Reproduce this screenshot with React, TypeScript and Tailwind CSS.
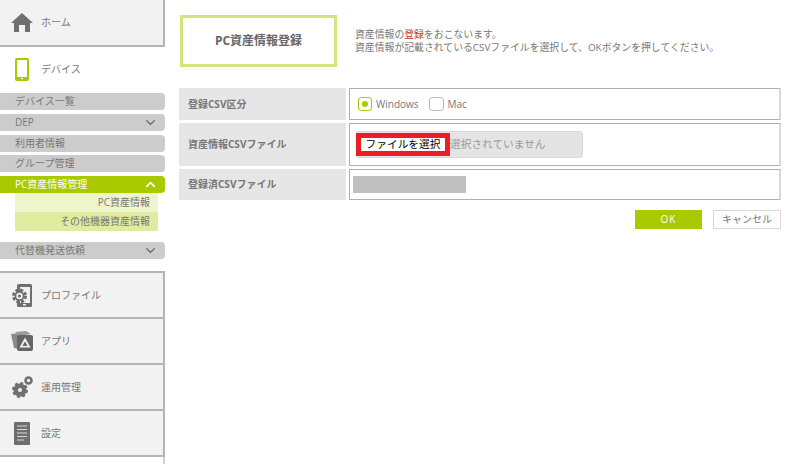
import { ChevronDown, ChevronUp } from "lucide-react";
import type { ReactNode } from "react";

function HomeIcon() {
  return (
    <svg width="22" height="19" viewBox="0 0 22 19">
      <path d="M11 0 L22 10 L19 10 L19 19 L14 19 L14 12 L8 12 L8 19 L3 19 L3 10 L0 10 Z" fill="#6f6f6f" />
    </svg>
  );
}

function DeviceIcon() {
  return (
    <svg width="14" height="23" viewBox="0 0 14 23">
      <rect x="1" y="1" width="12" height="21" rx="1" fill="#fff" stroke="#a8c800" strokeWidth="2" />
      <rect x="1" y="19" width="12" height="3" fill="#a8c800" />
      <rect x="6" y="20" width="2" height="1.2" fill="#fff" />
    </svg>
  );
}

function ProfileIcon() {
  return (
    <svg width="20" height="23" viewBox="0 0 20 23">
      <rect x="5" y="0" width="15" height="23" rx="1.5" fill="#6f6f6f" />
      <rect x="8" y="3" width="10" height="16" fill="#f2f2f2" />
      <rect x="11" y="20" width="3" height="1.5" fill="#f2f2f2" />
      <circle cx="7.5" cy="12" r="6" fill="none" stroke="#6f6f6f" strokeWidth="3" strokeDasharray="3 1.7" />
      <circle cx="7.5" cy="12" r="5" fill="#6f6f6f" />
      <circle cx="7.5" cy="12" r="3.2" fill="#f2f2f2" />
      <circle cx="7.5" cy="12" r="1.6" fill="#6f6f6f" />
    </svg>
  );
}

function AppIcon() {
  return (
    <svg width="23" height="20" viewBox="0 0 23 20">
      <path d="M0 3 L10 2 L14 6 L7 18 L3 17 Z" fill="#8a8a8a" />
      <path d="M4 1 L15 0 L20 3 L8 5 Z" fill="#9a9a9a" />
      <rect x="6" y="4" width="16" height="16" rx="2" fill="#666" />
      <path d="M14 6.5 L19.5 16.5 L8.5 16.5 Z" fill="#f2f2f2" />
      <path d="M14 10.5 L16.6 15 L11.4 15 Z" fill="#666" />
    </svg>
  );
}

function GearsIcon() {
  return (
    <svg width="21" height="22" viewBox="0 0 21 22">
      <circle cx="8" cy="14" r="4.3" fill="none" stroke="#6f6f6f" strokeWidth="4.6" />
      <circle cx="8" cy="14" r="6.8" fill="none" stroke="#6f6f6f" strokeWidth="2.4" strokeDasharray="3 2.34" />
      <circle cx="16.5" cy="4.5" r="3" fill="none" stroke="#6f6f6f" strokeWidth="2.6" />
    </svg>
  );
}

function DocIcon() {
  return (
    <svg width="16" height="23" viewBox="0 0 16 23">
      <rect width="16" height="23" rx="1" fill="#6f6f6f" />
      <path d="M3 4 H13 M3 7.5 H13 M3 11 H13 M3 14.5 H13 M3 18 H10" stroke="#d8d8d8" strokeWidth="1.2" />
    </svg>
  );
}

function MainItem({ icon, label, h = "h-[46px]" }: { icon: ReactNode; label: string; h?: string }) {
  return (
    <div className={`flex items-center bg-[#f2f2f2] border-r-2 border-b-2 border-[#b4b4b4] text-[#777] ${h}`}>
      <div className="w-[41px] h-full flex items-center justify-center pl-[3px] shrink-0">{icon}</div>
      <span className="text-[10px]">{label}</span>
    </div>
  );
}

function SubItem({ label, chevron, mb }: { label: string; chevron?: boolean; mb: string }) {
  return (
    <div className={`h-[17px] bg-[#cccccc] rounded-r-[4px] flex items-center justify-between pl-[15px] pr-[7px] text-[10px] text-[#777] ${mb}`}>
      <span>{label}</span>
      {chevron && <ChevronDown size={15} strokeWidth={2.2} className="text-[#666]" />}
    </div>
  );
}

function Row({ label, h, mb, children }: { label: string; h: string; mb: string; children: ReactNode }) {
  return (
    <div className={`flex gap-[3px] ${h} ${mb}`}>
      <div className="w-[167px] bg-[#e6e6e6] flex items-center pl-[9px] text-[10px] font-bold text-[#777]">{label}</div>
      <div className="flex-1 flex items-center bg-white border border-[#b0b0b0] border-r-2 border-r-[#d8d8d8]">{children}</div>
    </div>
  );
}

export default function App() {
  return (
    <div className="w-[790px] h-[464px] overflow-hidden bg-white flex font-['Open_Sans','Noto_Sans_CJK_JP',sans-serif]">
      <aside className="w-[165px] h-[464px] shrink-0 flex flex-col">
        <div className="h-[47px] flex items-center bg-[#f2f2f2] border-r-2 border-b-2 border-[#b4b4b4] text-[#777]">
          <div className="w-[41px] flex justify-center pl-[3px] shrink-0"><HomeIcon /></div>
          <span className="text-[10px]">ホーム</span>
        </div>
        <div className="h-[44px] mb-[2px] flex items-center text-[#777]">
          <div className="w-[41px] flex justify-center pl-[3px] shrink-0"><DeviceIcon /></div>
          <span className="text-[10px]">デバイス</span>
        </div>
        <SubItem label="デバイス一覧" mb="mb-[4px]" />
        <SubItem label="DEP" chevron mb="mb-[4px]" />
        <SubItem label="利用者情報" mb="mb-[3px]" />
        <SubItem label="グループ管理" mb="mb-[4px]" />
        <div className="h-[17px] bg-[#a9c900] rounded-r-[4px] flex items-center justify-between pl-[15px] pr-[7px] text-[10px] text-white">
          <span>PC資産情報管理</span>
          <ChevronUp size={15} strokeWidth={2.6} />
        </div>
        <div className="ml-[15px] w-[143px] text-[10px] text-[#777] text-right">
          <div className="h-[19px] bg-[#eef4cc] pr-[8px] leading-[19px]">PC資産情報</div>
          <div className="h-[19px] bg-[#e0eba0] pr-[8px] leading-[19px]">その他機器資産情報</div>
        </div>
        <div className="h-[11px]" />
        <SubItem label="代替機発送依頼" chevron mb="mb-[12px]" />
        <div className="border-t-2 border-[#b4b4b4]">
          <MainItem icon={<ProfileIcon />} label="プロファイル" />
          <MainItem icon={<AppIcon />} label="アプリ" />
          <MainItem icon={<GearsIcon />} label="運用管理" />
          <MainItem icon={<DocIcon />} label="設定" />
        </div>
        <div className="flex-1 border-r-2 border-[#d0d0d0]" />
      </aside>

      <main className="flex-1 pl-[14px] pr-[9px] pt-[15px]">
        <div className="flex items-center h-[52px] mb-[21px] pl-[1px]">
          <div className="w-[157px] h-[52px] border-[3px] border-[#d6e37a] flex items-center justify-center text-[12px] font-bold text-[#666]">
            PC資産情報登録
          </div>
          <div className="ml-[18px] text-[9.85px] leading-[13px] text-[#777]">
            <p>資産情報の<span className="text-[#c0392b]">登録</span>をおこないます。</p>
            <p>資産情報が記載されているCSVファイルを選択して、OKボタンを押してください。</p>
          </div>
        </div>

        <Row label="登録CSV区分" h="h-[32px]" mb="mb-[3px]">
          <div className="flex items-center pl-[8px] text-[10px] text-[#777]">
            <span className="w-[14px] h-[14px] rounded-[3px] border border-[#a9c900] flex items-center justify-center">
              <span className="w-[6px] h-[6px] rounded-full bg-[#a9c900]" />
            </span>
            <span className="ml-[4px]">Windows</span>
            <span className="w-[15px] h-[14px] rounded-[3px] border border-[#b8b8b8] ml-[10px]" />
            <span className="ml-[4px]">Mac</span>
          </div>
        </Row>
        <Row label="資産情報CSVファイル" h="h-[43px]" mb="mb-[3px]">
          <div className="ml-[6px] w-[227px] h-[27px] bg-[#e4e4e4] border border-[#d8d8d8] rounded-[3px] flex items-center text-[10.7px] text-[#999]">
            <span className="w-[94px] h-[23px] border-[5px] border-[#ee1c25] bg-white text-black -ml-[1px] flex items-center justify-center whitespace-nowrap">
              ファイルを選択
            </span>
            <span className="whitespace-nowrap">選択されていません</span>
          </div>
        </Row>
        <Row label="登録済CSVファイル" h="h-[31px]" mb="mb-[10px]">
          <div className="ml-[3px] w-[113px] h-[17px] bg-[#bfbfbf]" />
        </Row>

        <div className="flex justify-end gap-[11px]">
          <div className="w-[67px] h-[19px] bg-[#a9c900] text-white text-[10px] font-medium tracking-[1px] flex items-center justify-center">OK</div>
          <div className="w-[68px] h-[19px] bg-white border border-[#d8d8d8] text-[#777] text-[10px] flex items-center justify-center">キャンセル</div>
        </div>
      </main>
    </div>
  );
}
